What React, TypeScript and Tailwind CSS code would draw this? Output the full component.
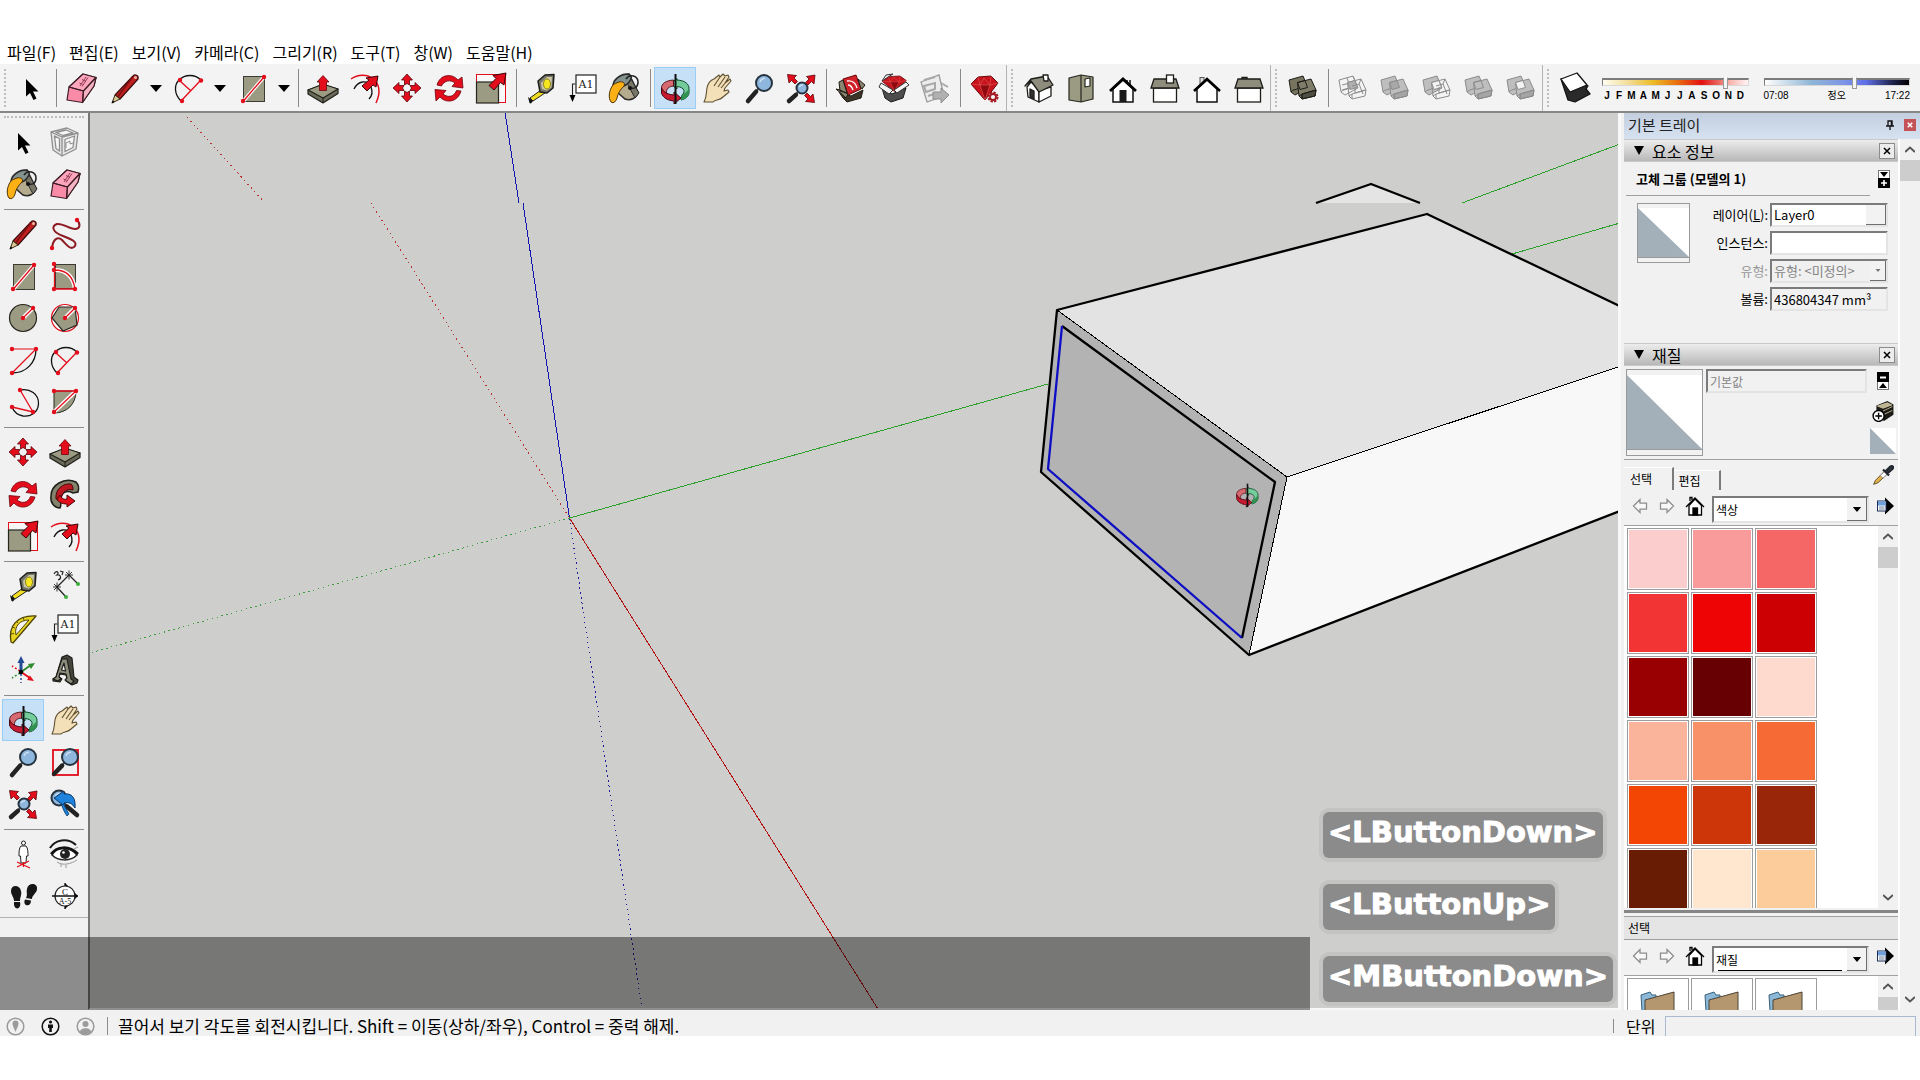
import React, { ReactNode } from "react";

const RED = "#e30d1b";
const STONE = "#9b9a82";

function Svg({ children, className = "size-10" }: { children: ReactNode; className?: string }) {
  return (
    <svg viewBox="0 0 40 40" className={className + " shrink-0"} fill="none" aria-hidden="true">
      {children}
    </svg>
  );
}

/* ---------- shared drawing pieces ---------- */

function Dots({ pts }: { pts: [number, number][] }) {
  return (
    <>
      {pts.map(([x, y]) => (
        <circle key={x + "-" + y} cx={x} cy={y} r="2.2" fill={RED} />
      ))}
    </>
  );
}

function BigArrow() {
  return <path d="M35 5 L33 17 L29.500 14.500 L23 22 L18 17.500 L25 10.500 L22 7.500 Z" fill={RED} stroke="#3a0509" strokeWidth="1" />;
}

function Lens({ x, y, r, hx, hy }: { x: number; y: number; r: number; hx: number; hy: number }) {
  const k = 0.72;
  const sx = hx < x ? -1 : 1;
  return (
    <>
      <path d={`M${x + sx * r * k} ${y + r * k} L${hx} ${hy}`} stroke="#555" strokeWidth="2" />
      <path d={`M${x + sx * (r + 3) * k} ${y + (r + 4) * k} L${hx} ${hy}`} stroke="#222" strokeWidth="4.500" strokeLinecap="round" />
      <circle cx={x} cy={y} r={r} fill="#8fb6dc" stroke="#26333f" strokeWidth="2" />
      <path d={`M${x - r / 2} ${y - 1} Q${x - r / 3} ${y - r / 1.7} ${x + 1} ${y - r / 1.7}`} stroke="#c9dff2" strokeWidth="1.500" />
    </>
  );
}

function Ruby({ x, y, s, squash = 1 }: { x: number; y: number; s: number; squash?: number }) {
  return (
    <g transform={`translate(${x} ${y}) scale(${s} ${s * squash})`}>
      <path d="M0 8 L7 1 L20 0 L27 7 L14 24 Z" fill="#c8131c" stroke="#6b060b" strokeWidth="1" />
      <path d="M9 9 L14 24 L19 9 Z" fill="#90090f" />
      <path d="M0 8 L9 9 L14 24 L19 9 L27 7 M9 9 L13 2 L19 9 Z M7 1 L9 9 M20 0 L19 9" stroke="#e05c5c" strokeWidth=".6" />
    </g>
  );
}

function OrbitArt() {
  return (
    <>
      <path d="M22 12 C30 12.500 34 16 34 20.500 L34 25 C33.500 28.500 30.500 31 26 32 L27 27 C28.500 26 29 24.500 29 22.500 C28 20 26 19 22 18.500 L22 21 L15.500 16 L22 10.500 Z" fill="#74cb9b" stroke="#0d4a27" strokeWidth="1" />
      <path d="M34 20.500 L34 25 C33.500 28.500 30.500 31 26 32 L27 27 C29.500 25.500 32 24 34 20.500 Z" fill="#319150" />
      <path d="M18.500 12 C11 12.500 6.500 15.500 6.500 20 C8 23.500 10 25 11.500 25.500 C11 20.500 14 18.500 18.500 18 Z" fill="#d76a70" stroke="#4a0710" strokeWidth=".9" />
      <path d="M6.500 20 L6.500 25 C8 30 13 32.500 19 33 V36 L26 30 L19 24 V27 C13 26.500 8.500 24.500 6.500 20 Z" fill="#c51a32" stroke="#4a0710" strokeWidth="1" />
      <path d="M20.500 6 V36" stroke="#111" strokeWidth="2" />
    </>
  );
}

function SolidPair({ a, b, mid, line, wireA, wireB }: { a: string; b: string; mid?: string; line: string; wireA?: boolean; wireB?: boolean }) {
  return (
    <g stroke={line} strokeWidth="1" strokeLinejoin="round">
      <path d="M6 12 L20 8 L25 20 L12 27 L8 24 Z" fill={wireA ? "none" : a} />
      <path d="M8 24 L9.500 22.500 L17 20" />
      {wireA && <path d="M9 17 L17 15 M14 10 L17 19 M20 8 L22 13 M9 22 L23 18" />}
      <path d="M14.500 14.500 L28 11 L33 22 L32 28 L19 31 L16 28 Z" fill={wireB ? "none" : b} />
      <path d="M16 28 L19 26 L33 22 M19 26 L19 31" />
      {!wireB && <path d="M19 26 L33 22 L32 28 L19 31 Z" fill={line} fillOpacity=".5" />}
      <path d="M14.500 14.500 L22 12.500 L24.500 19.500 L17 21.500 Z" fill={mid ?? "none"} />
      {wireB && <path d="M28 11 L26 16 L19 18 M26 16 L30 26 M22 19 V25 L32 22" />}
    </g>
  );
}

const AxisArrow = ({ r }: { r: number }) => (
  <path transform={`rotate(${r} 20 20)`} d="M20 6 L25.500 12 H22.500 V17 L20 15.500 L17.500 17 V12 H14.500 Z" fill={RED} stroke="#5b060c" strokeWidth=".8" />
);

const CornerArrow = ({ r }: { r: number }) => (
  <path transform={`rotate(${r} 20 20.500)`} d="M34 7 L33 16 L30.500 13.500 L27 17 L24.500 14.500 L28 11 L25.500 8.500 Z" fill={RED} stroke="#5b060c" strokeWidth=".8" />
);

/* ---------- icon set ---------- */

const icons: Record<string, ReactNode> = {
  select: <path d="M15 11 V28.500 L19 25 L22.500 32 L25.500 30.500 L22 23.500 H27.500 Z" fill="#000" />,
  component: (
    <g stroke="#8f8f8f" strokeWidth="1.300" strokeLinejoin="round">
      <path d="M6 10 L22 6 L33 11 L31 27 L17 34 L8 28 Z" fill="#e6e6e6" />
      <path d="M6 10 L17 15 L33 11 M17 15 V34" />
      <path d="M9.500 14 L14.500 16.500 V29 L11 26.500 Z M20 17.500 L29.500 14 L28 25.500 L20 29.500 Z M11 10.500 L21 8 L28 11 L18 13.500 Z" fill="#f6f6f6" />
      <path d="M21 26 V21 L25 19 V22 L28 21" strokeWidth="1" />
    </g>
  ),
  bucket: (
    <>
      <path d="M15 9 L24 6 L33 24 C32 30 26 33 20 31 L12 24 Z" fill="#b5ab8e" stroke="#2b2b2b" strokeWidth="1.500" />
      <path d="M26 11 L34 25 L30 30 L22 15 Z" fill="#777568" stroke="#2b2b2b" />
      <path d="M8 17 C9 10 19 4 25 7 C28 9 25 14 21 17 C17 19 13 21 8 17 Z" fill="#84928f" stroke="#2b2b2b" strokeWidth="1.500" />
      <path d="M8 17 C4 22 3 30 6 34 C9 36 11 33 12 30 C13 25 15 22 19 18 C21 15 17 13 14 14 C11 15 9 16 8 17 Z" fill="#fbb016" stroke="#4a3206" strokeWidth="1" />
      <path d="M21 11 C25 5 33 8 33 14 C33 20 29 21 25 20" stroke="#222" strokeWidth="1.500" />
      <circle cx="25" cy="20" r="2" fill="#111" />
    </>
  ),
  eraser: (
    <g strokeLinejoin="round" stroke="#3d1c24" strokeWidth="1.200">
      <path d="M8 19 L22 6 L35 9.500 L33 18 L21.500 34.500 L6 32 Z" fill="#f98ba9" />
      <path d="M8 19 L22 6 L35 9.500 L22.500 23 Z" fill="#fba6bd" />
      <path d="M22.500 23 L35 9.500 L33 18 L21.500 34.500 Z" fill="#f7b3c4" />
      <path d="M8 19 L22.500 23 L21.500 34.500" />
      <path d="M19 18 L25 9 M21 18.500 L27 9.500 M18.500 15 l3 1.500 M21 11.500 l4 2" stroke="#8c3048" strokeWidth=".9" />
    </g>
  ),
  pencil: (
    <g strokeLinejoin="round">
      <path d="M28 8 C30 5.500 34 7.500 33 11 L15 31 L10 27 Z" fill="#c02020" stroke="#3c0c0c" strokeWidth="1.200" />
      <path d="M27.500 9 L13 28.500" stroke="#7c1010" strokeWidth="1.500" />
      <path d="M10 27 L15 31 L7 35 Z" fill="#dcc99a" stroke="#33290f" strokeWidth="1" />
      <path d="M8 32.500 L9.500 34 L6.500 35.500 Z" fill="#000" />
      <circle cx="30.500" cy="9.500" r="1.500" fill="#e9b7a0" />
    </g>
  ),
  freehand: (
    <>
      <path d="M7 34 C8 25 13 22 17 26 C22 31 25 36 29 33 C34 28 26 25 18 22 C7 18 6 12 12 10 C18 9 24 15 30 15 C35 15 36 10 32 6" stroke="#8d1a22" strokeWidth="2" />
      <Dots pts={[[7, 34], [32, 6]]} />
    </>
  ),
  rect: (
    <>
      <rect x="10.500" y="8.500" width="21" height="25" fill={STONE} stroke="#3b3b33" />
      <path d="M10.500 33 L31 9" stroke="#fff" strokeWidth="3.500" />
      <path d="M10.500 33 L31 9" stroke={RED} strokeWidth="1.300" />
      <Dots pts={[[10, 33], [31, 9]]} />
    </>
  ),
  rotrect: (
    <>
      <rect x="10.500" y="8.500" width="20" height="24" fill={STONE} stroke="#3b3b33" />
      <path d="M10 14 C21 14 28 20 30 33" stroke="#fff" strokeWidth="4" />
      <path d="M9.500 8 V33 H30 C28 20 21 14 10 14" stroke={RED} strokeWidth="1.300" />
      <Dots pts={[[9, 8], [9, 14], [9, 33], [30, 33]]} />
    </>
  ),
  circle: (
    <>
      <circle cx="20" cy="20" r="13.500" fill={STONE} stroke="#26261f" strokeWidth="1.200" />
      <path d="M20 20 L30 10" stroke="#fff" strokeWidth="4" />
      <path d="M20 20 L30 10" stroke={RED} strokeWidth="1.300" />
      <Dots pts={[[20, 20], [30, 10]]} />
    </>
  ),
  polygon: (
    <>
      <circle cx="20" cy="20" r="13.500" stroke={RED} fill="#fff" strokeWidth="1.200" />
      <path d="M7 20 L14 9 L30 9 L32 27 L18 33 Z" fill={STONE} stroke="#26261f" strokeWidth="1.200" />
      <path d="M20 20 L30 10" stroke="#fff" strokeWidth="4" />
      <path d="M20 20 L30 10" stroke={RED} strokeWidth="1.300" />
      <Dots pts={[[20, 20], [30, 10]]} />
    </>
  ),
  arcA: (
    <>
      <path d="M33 9 C33 22 24 33 9 33" stroke="#111" strokeWidth="1.300" />
      <path d="M33 9 H9 M9 33 L33 9" stroke={RED} strokeWidth="1.200" />
      <Dots pts={[[9, 9], [33, 9], [9, 33]]} />
    </>
  ),
  arcB: (
    <>
      <path d="M12 33 C5 26 5 17 10 12 C16 6 26 6 32 12" stroke="#111" strokeWidth="1.300" />
      <path d="M12 33 L31 13 M11 13 L22 23" stroke={RED} strokeWidth="1.300" />
      <Dots pts={[[11, 12], [32, 12.500], [13, 33]]} />
    </>
  ),
  arcC: (
    <>
      <path d="M17 8 C27 6 36 12 35.500 22 C35 31 27 35 20 34 C14 33 11 30 9 25" stroke="#111" strokeWidth="1.300" />
      <path d="M17 8 L30 30 L9 25" stroke={RED} strokeWidth="1.300" />
      <Dots pts={[[17, 8], [30, 30], [9, 25]]} />
    </>
  ),
  pie: (
    <>
      <path d="M9 9 H31 C31 22 22 31 9 31 Z" fill={STONE} stroke="#26261f" />
      <path d="M9 30 L31 9" stroke="#fff" strokeWidth="4" />
      <path d="M9 9 H31 L9 30" stroke={RED} strokeWidth="1.300" />
      <Dots pts={[[9, 9], [31, 9], [9, 30]]} />
    </>
  ),
  push: (
    <>
      <path d="M5 22 L20 17 L35 21 V25.500 L20 35 L5 26 Z" fill="#6a6a58" stroke="#1f1f1a" strokeWidth="1.200" strokeLinejoin="round" />
      <path d="M5 22 L20 16 L35 21 L20 30 Z" fill={STONE} stroke="#1f1f1a" strokeWidth="1.200" strokeLinejoin="round" />
      <path d="M20 30 V35" stroke="#1f1f1a" />
      <path d="M20 7.500 L26 14 H23.500 V22.500 H16.500 V14 H14 Z" fill={RED} stroke="#6b060c" strokeWidth=".8" />
    </>
  ),
  offset: (
    <>
      <path d="M6 11 C20 1 42 12 31 35" stroke={RED} strokeWidth="1.500" />
      <path d="M9 21 C13 13 22 11 26 19 C28 24 27 28 24 31" stroke="#111" strokeWidth="1.300" />
      <path d="M33 8 L31 19 L28 17 L22 23 L17 18 L24 12 L21 10 Z" fill={RED} stroke="#3a0509" strokeWidth="1" />
    </>
  ),
  move: (
    <>
      <AxisArrow r={0} />
      <AxisArrow r={90} />
      <AxisArrow r={180} />
      <AxisArrow r={270} />
    </>
  ),
  rotate: (
    <g fill={RED} stroke="#6b060c" strokeWidth=".8">
      <path d="M8 17 C11 6 23 5 29 12 L33 9 L34 20 L23 18.500 L26 15 C21 11 15 13 12.500 18 Z" />
      <path d="M32 23 C29 34 17 36 11 29 L7 33 L6 21.500 L17 22.500 L14 26 C19 30 25 29 27.500 22.500 Z" />
    </g>
  ),
  follow: (
    <>
      <path d="M6 22 C6 11 19 3 31 8 C34 11 34 15 33 18 L28 19 C22 16 17 18 16 24 C15 28 17 30 15 34 C9 34 5 28 6 22 Z" fill="#83826d" stroke="#1f1f1a" strokeWidth="1.500" />
      <path d="M11 25 C10 15 18 9 26 10 C28 12 28 14 28 16 C22 14 17 18 16 25 Z" fill="#bd1820" stroke="#4c060a" />
      <path d="M15 21 C16 24 19 26 22 25 L22 21 L30 27 L22 33 L22 30 C17 30 13 28 12 25 Z" fill={RED} stroke="#4c060a" />
    </>
  ),
  scale: (
    <>
      <rect x="5.500" y="6.500" width="29" height="28" stroke={RED} fill="#fff" fillOpacity=".4" />
      <rect x="5.500" y="14" width="22" height="21" fill={STONE} stroke="#26261f" strokeWidth="1.200" />
      <BigArrow />
    </>
  ),
  tape: (
    <g strokeLinejoin="round">
      <path d="M20 22 L9 30 L12 33 L24 25 Z" fill="#f2dc22" stroke="#222" strokeWidth="1" />
      <path d="M7 29 L12 33 L10 35.500 L8.500 35 Z" fill="#111" />
      <path d="M17 13 L24 7 L33 6.500 L32 20 L26 25 L19 24 Z" fill="#77776c" stroke="#1d1d1a" strokeWidth="1.500" />
      <path d="M20 15 L26 9 L31 9 L30.500 19 L26 22.500 L21 21 Z" fill="#c9c6a6" />
      <ellipse cx="26" cy="16" rx="3.500" ry="5" fill="#f7e720" stroke="#8f8414" />
    </g>
  ),
  dims: (
    <>
      <path d="M12 21 L24 9 M11 20 L21 31 M24 9 L33 18" stroke="#222" strokeWidth="1.200" />
      <path d="M12 16.500 V25.500 M8 21 H16 M9 18 L15 24 M9 24 L15 18 M24 4.500 V13.500 M20 9 H28 M21 6 L27 12 M21 12 L27 6" stroke="#222" strokeWidth=".9" />
      <path d="M9 8 C11 4 15 6 12 9 C16 8 17 13 13 14 M15 5 L18 6 L17 9" stroke="#222" strokeWidth="1.200" />
      <circle cx="21" cy="31" r="2" fill="#3fae3f" />
      <circle cx="33" cy="18" r="2" fill="#3fae3f" />
    </>
  ),
  protractor: (
    <g stroke="#4d4303" strokeLinejoin="round">
      <path d="M8 34 C5 18 14 7 33 8 L10 35 Z" fill="#e9d51f" strokeWidth="1.300" />
      <path d="M13 27 C11 18 17 12 26 12 Z" fill="#f3f3f3" />
      <path d="M8 26 l3 -.5 M9 19 l3 1 M13 13 l2 2 M20 9 l1 3" strokeWidth=".9" />
    </g>
  ),
  text: (
    <>
      <rect x="13" y="7" width="20" height="18" fill="#fff" stroke="#222" strokeWidth="1.200" />
      <text x="23" y="20" textAnchor="middle" fontFamily="DejaVu Serif, serif" fontSize="11" fill="#222">A1</text>
      <path d="M12.500 16 H9.500 V28" stroke="#222" strokeWidth="1.100" />
      <path d="M6.500 27 H12.500 L9.500 34 Z" fill="#000" />
    </>
  ),
  axes: (
    <>
      <path d="M18 22 V11" stroke="#224a96" strokeWidth="3" />
      <path d="M18 6 L21.500 13 H14.500 Z" fill="#224a96" />
      <path d="M18 22 L28 15" stroke="#2e8b2e" strokeWidth="2" />
      <path d="M32 13 L28 19 L25 14 Z" fill="#2e8b2e" />
      <path d="M18 22 L27 28" stroke={RED} strokeWidth="2" />
      <path d="M31 31 L24 30 L27 25.500 Z" fill={RED} />
      <path d="M18 24 V33" stroke="#224a96" strokeWidth="1.500" strokeDasharray="2 2" />
      <path d="M17 23 L9 28" stroke="#2e8b2e" strokeWidth="1.500" strokeDasharray="2 2" />
      <path d="M17 21 L9 16" stroke={RED} strokeWidth="1.500" strokeDasharray="2 2" />
      <circle cx="18" cy="22" r="2.300" fill="#000" />
    </>
  ),
  text3d: (
    <g strokeLinejoin="round" stroke="#1c1c18" strokeWidth="1.100">
      <path d="M8 29 L11 27 L17 7 L22 5 L27 8 L29 27 L33 30 L32 33 L27 35 L21 31 L22 28 L21 25 L15 24 L14 27 L17 29 L15 32 L8 31 Z" fill="#45453c" />
      <path d="M8 29 L11 27 L17 9 L22 9 L26 29 L29 31 L26 34 L20 30 L22 28 L21 24 L15 23 L14 27 L16 28.500 L13 31 Z" fill="#8e8d7d" />
      <path d="M16.500 20 L19 13 L20.500 21 Z" fill="#f3f3f3" />
    </g>
  ),
  orbit: <OrbitArt />,
  hand: (
    <path d="M7 34 C10 28 9 25 10 20 C11 15 14 12 17 11 L22 7 L23 9 L26 6 L28 8 L31 7 L32 9 L28 15 L33 11 L34 13 L28 20 L27 23 L31 22 L32 24 L26 29 C22 33 18 31 16 34 Z M17 18 L23 9 M21 19 L28 9 M24 20 L29 14" fill="#f3e0b8" stroke="#5e4f31" strokeWidth="1.100" strokeLinejoin="round" />
  ),
  zoom: <Lens x={25} y={15} r={8} hx={9} hy={33} />,
  zoomwin: (
    <>
      <rect x="8" y="8" width="25" height="25" stroke={RED} strokeWidth="1.800" />
      <Lens x={25} y={15} r={8} hx={9} hy={32} />
    </>
  ),
  zoomext: (
    <>
      <Lens x={21} y={20} r={5.5} hx={8} hy={33} />
      <CornerArrow r={0} />
      <CornerArrow r={90} />
      <CornerArrow r={270} />
    </>
  ),
  previous: (
    <>
      <Lens x={14} y={14} r={7.5} hx={32} hy={31} />
      <path d="M9 14 L19 7 V10 C26 9 31 13 30 24 C27 19 24 18 19 19 V22 Z" fill="#1f83dc" stroke="#0b3866" strokeWidth="1" />
      <path d="M16 20 C18 24 19 28 22 32 L24 30 L19 21 Z" fill="#1f83dc" stroke="#0b3866" strokeWidth=".8" />
    </>
  ),
  camera: (
    <>
      <circle cx="20.500" cy="9" r="2" fill="#fff" stroke="#222" />
      <path d="M18 12 H23 C25 14 25 19 25 22 H23.500 L23 29 H18 L17.500 22 H16 C16 18 16 14 18 12 Z" fill="#fff" stroke="#222" />
      <path d="M14 33 L26 27 M14 28 L27 34 M20.500 28 V33" stroke={RED} strokeWidth="1.200" />
    </>
  ),
  eye: (
    <>
      <path d="M5 14 C10 6 22 3 31 11" stroke="#1a1a1a" strokeWidth="2.200" />
      <path d="M7 21 C12 13 24 12 32 21 C25 28 13 27 7 21 Z" fill="#fff" stroke="#222" strokeWidth="1.500" />
      <path d="M6 20 C12 12 24 11 33 20" stroke="#111" strokeWidth="2.500" />
      <circle cx="20" cy="20" r="5" fill="#222" />
      <circle cx="18.500" cy="18.500" r="1.300" fill="#fff" />
      <path d="M12 28 C18 32 26 30 32 26 M16 30 V33 M21 31 V34 M29 15 l4 -2" stroke="#999" strokeWidth="1" />
    </>
  ),
  feet: (
    <g fill="#161616">
      <path d="M8 15 C8 8 17 9 18 15 C19 19 17 21 17 25 L11 25 C11 21 8 19 8 15 Z" />
      <path d="M24 13 C25 6 35 7 34 13 C34 17 29 19 29 23 L23 22 C25 18 23 17 24 13 Z" />
      <path d="M11 26 L17 26 C19 34 10 35 11 26 Z M22 23.500 L28 24.500 C28 32 19 30 22 23.500 Z" />
    </g>
  ),
  section: (
    <>
      <path d="M20 7 L33 20 L20 33 Z" fill="#000" />
      <circle cx="20" cy="20" r="10" fill="#fff" stroke="#222" strokeWidth="1.200" />
      <path d="M7 20 H33 M20 7 V10 M20 30 V33" stroke="#111" strokeWidth="1.300" />
      <text x="20" y="18.500" textAnchor="middle" fontFamily="Liberation Serif, serif" fontSize="9" fill="#111">C</text>
      <text x="20" y="28" textAnchor="middle" fontFamily="Liberation Serif, serif" fontSize="8" fill="#111">A-5</text>
    </>
  ),
  warehouse: (
    <>
      <path d="M8 24 L20 28 L32 22 L30 30 L16 34 L12 30 Z" fill="#3b3629" stroke="#1d1a12" />
      <path d="M12 11 L25 7 L30 21 L17 27 Z" fill="#d0202a" stroke="#6b060b" />
      <path d="M16 13 C21 12 25 15 26 20 M17 17 C20 17 21 19 22 22" stroke="#fff" strokeWidth="1.300" />
      <path d="M8 14 L12 12 L16 25 L9 23 Z M5 21 L9 22 L17 26 L15 30 Z M27 11 L34 17 L31 21 L29 18 Z" fill="#8a8471" stroke="#1d1a12" />
    </>
  ),
  extwarehouse: (
    <>
      <path d="M9 20 L19 26 L33 20 L30 30 L18 34 L12 30 Z" fill="#4d4d4d" stroke="#1a1a1a" />
      <Ruby x={9} y={8} s={0.9} squash={0.72} />
      <path d="M8 15 L6 19 L16 26 L20 22 Z M33 14 L36 17 L24 25 L21 22 Z M9 13 L13 7 L20 6 L15 9 Z" fill="#f4f4f4" stroke="#333" />
    </>
  ),
  send: (
    <>
      <path d="M6 14 L24 7 L29 28 L12 34 Z" fill="#ececec" stroke="#9b9b9b" strokeWidth="1.300" />
      <path d="M9 12 L20 9 M9 18 L20 15 V21 L11 24 Z M13 28 L19 26 M26 15 L33 19" stroke="#a8a8a8" strokeWidth="2" />
      <path d="M18 24 H26 V20 L34 27 L26 35 V31 H18 Z" fill="#b0b0b0" stroke="#8e8e8e" />
    </>
  ),
  extension: (
    <>
      <Ruby x={6} y={8} s={1} />
      <circle cx="28" cy="29" r="4.500" fill="#f3f3f3" stroke="#a31820" strokeWidth="2" strokeDasharray="2.400 1.100" />
      <circle cx="28" cy="29" r="3" stroke="#a31820" strokeWidth="1.800" />
    </>
  ),
  viewIso: (
    <g stroke="#1c1c18" strokeWidth="1.300" strokeLinejoin="round">
      <path d="M8 19 L12 14 L20 21 V34 L9 29 Z" fill="#fff" />
      <path d="M20 23 L32 19 V28 L20 34 Z" fill="#fff" />
      <path d="M6 18 L12 11 L28 8 L34 17 L20 24 L12 13 Z" fill="#8e8d7d" />
      <path d="M24 7 H29 V13 H25 Z" fill="#fff" />
      <path d="M11 21 L15 23 V31 L11 29 Z" fill="#333" />
    </g>
  ),
  viewTop: (
    <g stroke="#26261f" strokeWidth="1.200" strokeLinejoin="round">
      <path d="M8 10 L20 7 L32 9 V31 L20 34 L8 32 Z" fill={STONE} />
      <path d="M20 7 V34" />
      <path d="M24 11 L29 10 V18 L24 19 Z" fill="#fff" />
    </g>
  ),
  viewFront: (
    <>
      <path d="M24 12 V15 M27 12 V17" stroke="#111" strokeWidth="1.500" />
      <path d="M10 21 L20 12 L30 21 V34 H10 Z" fill="#fff" stroke="#111" strokeWidth="1.500" />
      <path d="M7 23 L20 11 L33 23" stroke="#000" strokeWidth="2.800" />
      <rect x="16.500" y="22" width="7" height="12" fill="#1b1b1b" />
    </>
  ),
  viewRight: (
    <g stroke="#1c1c18" strokeWidth="1.300">
      <rect x="8.500" y="20" width="23" height="14" fill="#fff" />
      <path d="M9 11 H31 L34 20 H6 Z" fill="#8e8d7d" />
      <rect x="21.500" y="7" width="7" height="8" fill="#fff" />
    </g>
  ),
  viewBack: (
    <>
      <rect x="13" y="9.500" width="4" height="7" fill="#ddd" stroke="#555" />
      <path d="M10 21 L20 12 L30 21 V34 H10 Z" fill="#fff" stroke="#111" strokeWidth="1.500" />
      <path d="M7 23 L20 11 L33 23" stroke="#000" strokeWidth="2.500" />
    </>
  ),
  viewLeft: (
    <g stroke="#1c1c18" strokeWidth="1.300">
      <rect x="8.500" y="20" width="23" height="14" fill="#fff" />
      <path d="M13 11 V9.500 H18 V11" fill="#777" />
      <path d="M9 11 H31 L34 20 H6 Z" fill="#8e8d7d" />
    </g>
  ),
  outerShell: <SolidPair a="#76745f" b="#7f7d6a" line="#1d1d18" />,
  intersect: <SolidPair a="none" b="none" mid="#b0b0b0" line="#8c8c8c" wireA wireB />,
  union: <SolidPair a="#bebebe" b="#bebebe" mid="#a8a8a8" line="#8c8c8c" />,
  subtract: <SolidPair a="#bebebe" b="none" mid="#f3f3f3" line="#8c8c8c" wireB />,
  trim: <SolidPair a="#bebebe" b="#bebebe" line="#8c8c8c" />,
  split: <SolidPair a="#bebebe" b="#bebebe" mid="#f3f3f3" line="#8c8c8c" />,
  shadow: (
    <g strokeLinejoin="round" stroke="#111" strokeWidth="1.300">
      <path d="M6 11 L13 32 L20 34 L35 26 L31 21 L33 18 Z" fill="#2a2a2a" />
      <path d="M6 11 L22 5 L32 17 L15 24 Z" fill="#fff" />
    </g>
  ),
  prev: <path d="M7 20 L20 7 V14 H33 V26 H20 V33 Z" stroke="#8c8c8c" strokeWidth="2.500" fill="#f8f8f8" />,
  next: <path d="M33 20 L20 7 V14 H7 V26 H20 V33 Z" stroke="#8c8c8c" strokeWidth="2.500" fill="#f8f8f8" />,
  home: (
    <g stroke="#000" strokeWidth="2.600">
      <path d="M10 10 V3 H14 V8" />
      <path d="M8 19 V38 H33 V19 L20 6 Z" fill="#fff" />
      <path d="M2 22 L20 4 L38 22" />
      <rect x="16" y="24" width="9" height="14" fill="#000" />
    </g>
  ),
  details: (
    <>
      <path d="M20 3 L38 20 L20 37 V28 H12 V12 H20 Z" fill="#000" />
      <rect x="5" y="10" width="17" height="20" fill="#fff" stroke="#1c2d55" strokeWidth="2" />
      <rect x="6" y="11" width="15" height="8" fill="#6e9edb" />
      <path d="M8 22 H19 M8 26 H19" stroke="#6b7c9b" strokeWidth="2" />
    </>
  ),
  addBox: (
    <>
      <path d="M8 10 L28 2 L39 8 V27 L22 38 L8 28 Z" fill="#1b1a15" />
      <path d="M10 11 L28 5 L36 9 L20 15 Z M20 20 L37 12 M20 27 L37 19" fill="#bdb591" stroke="#d3cba8" strokeWidth="1.500" />
      <circle cx="12" cy="29" r="10" fill="#fff" stroke="#000" strokeWidth="2.500" />
      <path d="M12 23 V35 M6 29 H18" stroke="#000" strokeWidth="2.500" />
    </>
  ),
  dropper: (
    <>
      <path d="M3 37 L6 30 L23 13 L28 18 L11 34 Z" fill="#e2b14b" stroke="#4a3a16" strokeWidth="1.500" />
      <path d="M15 21 L23 13 L28 18 L20 26 Z" fill="#fff" stroke="#555" />
      <path d="M20 10 L31 21 M25 13 L33 5 C37 1 41 7 36 10 L28 17 Z" fill="#3d4247" stroke="#222730" strokeWidth="4" />
    </>
  ),
};

/* ---------- toolbar parts ---------- */

function Tool({ icon, label, active }: { icon: string; label: string; active?: boolean }) {
  return (
    <button
      type="button"
      aria-label={label}
      className={
        active
          ? "flex h-[42px] w-[42px] shrink-0 items-center justify-center border border-[#99cdf5] bg-[#c5e0f7]"
          : "flex h-[42px] w-[42px] shrink-0 items-center justify-center"
      }
    >
      <Svg>{icons[icon]}</Svg>
    </button>
  );
}

function SplitTool({ icon, label }: { icon: string; label: string }) {
  return (
    <div className="ml-0.5 flex shrink-0 items-center">
      <Tool icon={icon} label={label} />
      <button type="button" aria-label={label + " 옵션"} className="flex h-10 w-5 items-center justify-center">
        <svg viewBox="0 0 12 7" className="h-[7px] w-3" aria-hidden="true">
          <path d="M0 0 H12 L6 7 Z" fill="#000" />
        </svg>
      </button>
    </div>
  );
}

const Sep = () => (
  <div className="flex w-2 shrink-0 justify-center">
    <div className="h-[38px] w-px bg-[#8a8a8a]" />
  </div>
);

const GroupEnd = () => (
  <div className="flex h-[46px] w-3 shrink-0 gap-1 border-l border-[#b4b4b4] py-1 pl-1">
    <div className="h-full border-l-2 border-dotted border-[#bdbdbd]" />
  </div>
);

function TopToolbar() {
  return (
    <div className="flex h-[49px] shrink-0 items-center overflow-hidden border-b-2 border-[#868885] bg-[#f3f3f3] pt-px">
      <div className="flex w-2.5 shrink-0 justify-center">
        <div className="h-[38px] border-l-2 border-dotted border-[#bdbdbd]" />
      </div>
      <Tool icon="select" label="선택" />
      <Sep />
      <Tool icon="eraser" label="지우기" />
      <SplitTool icon="pencil" label="선" />
      <SplitTool icon="arcB" label="호" />
      <SplitTool icon="rect" label="직사각형" />
      <Sep />
      <Tool icon="push" label="밀기/끌기" />
      <Tool icon="offset" label="오프셋" />
      <Tool icon="move" label="이동" />
      <Tool icon="rotate" label="회전" />
      <Tool icon="scale" label="배율" />
      <Sep />
      <Tool icon="tape" label="줄자" />
      <Tool icon="text" label="텍스트" />
      <Tool icon="bucket" label="페인트 통" />
      <Sep />
      <Tool icon="orbit" label="궤도" active />
      <Tool icon="hand" label="이동 보기" />
      <Tool icon="zoom" label="확대/축소" />
      <Tool icon="zoomext" label="범위 확대/축소" />
      <Sep />
      <Tool icon="warehouse" label="3D Warehouse" />
      <Tool icon="extwarehouse" label="Extension Warehouse" />
      <Tool icon="send" label="LayOut으로 보내기" />
      <Sep />
      <Tool icon="extension" label="확장 프로그램 관리자" />
      <GroupEnd />
      <Tool icon="viewIso" label="등각" />
      <Tool icon="viewTop" label="맨 위" />
      <Tool icon="viewFront" label="앞" />
      <Tool icon="viewRight" label="오른쪽" />
      <Tool icon="viewBack" label="뒤" />
      <Tool icon="viewLeft" label="왼쪽" />
      <GroupEnd />
      <Tool icon="outerShell" label="외부 셸" />
      <Sep />
      <Tool icon="intersect" label="교차" />
      <Tool icon="union" label="합집합" />
      <Tool icon="subtract" label="빼기" />
      <Tool icon="trim" label="자르기" />
      <Tool icon="split" label="분할" />
      <GroupEnd />
      <Tool icon="shadow" label="그림자" />
      <ShadowSliders />
    </div>
  );
}

const rangeClass =
  "block h-2 w-full appearance-none border border-t-2 border-[#d8d8d8] border-t-[#7c7c7c] border-l-[#7c7c7c] [&::-webkit-slider-thumb]:h-3 [&::-webkit-slider-thumb]:w-[5px] [&::-webkit-slider-thumb]:appearance-none [&::-webkit-slider-thumb]:border [&::-webkit-slider-thumb]:border-[#9a9a9a] [&::-webkit-slider-thumb]:border-t-white [&::-webkit-slider-thumb]:bg-[#f5f5f5]";

function ShadowSliders() {
  return (
    <div className="mt-1 ml-1.5 flex min-w-0 flex-1 gap-[15px] pr-2.5 font-['Liberation_Sans','Noto_Sans_CJK_KR',sans-serif] text-[10px] leading-3 text-black">
      <div className="flex-1">
        <input type="range" aria-label="날짜" defaultValue={86} className={rangeClass + " bg-[linear-gradient(90deg,#fffdf0,#f2dc96_18%,#edbd28_34%,#e87511_50%,#e31010_68%,#e86a62_80%,#f9b6b0_88%,#fff4f4)]"} />
        <div className="mt-1 flex justify-between pr-1 pl-px font-bold">
          {"JFMAMJJASOND".split("").map((m, i) => (
            <span key={i} className="w-2 text-center">{m}</span>
          ))}
        </div>
      </div>
      <div className="flex-1">
        <input type="range" aria-label="시간" defaultValue={63} className={rangeClass + " bg-[linear-gradient(90deg,#ffffff,#8fb6d6_32%,#7d95e6_55%,#5f6fe8_70%,#20264d_88%,#000)]"} />
        <div className="mt-1 flex justify-between">
          <span>07:08</span>
          <span>정오</span>
          <span>17:22</span>
        </div>
      </div>
    </div>
  );
}

const leftGroups: [string, string][][] = [
  [["select", "선택"], ["component", "구성요소"], ["bucket", "페인트 통"], ["eraser", "지우기"]],
  [["pencil", "선"], ["freehand", "자유형"], ["rect", "직사각형"], ["rotrect", "회전된 직사각형"], ["circle", "원"], ["polygon", "다각형"], ["arcA", "호"], ["arcB", "2점 호"], ["arcC", "3점 호"], ["pie", "파이"]],
  [["move", "이동"], ["push", "밀기/끌기"], ["rotate", "회전"], ["follow", "따라가기"], ["scale", "배율"], ["offset", "오프셋"]],
  [["tape", "줄자"], ["dims", "치수"], ["protractor", "각도기"], ["text", "텍스트"], ["axes", "축"], ["text3d", "3D 텍스트"]],
  [["orbit", "궤도"], ["hand", "이동 보기"], ["zoom", "확대/축소"], ["zoomwin", "창 확대/축소"], ["zoomext", "범위"], ["previous", "이전"]],
  [["camera", "카메라 배치"], ["eye", "둘러보기"], ["feet", "걷기"], ["section", "단면"]],
];

function LeftToolbar() {
  return (
    <div className="w-[88px] shrink-0 bg-[#f1f1f1]">
      <div className="border-b border-[#b4b4b4] px-0.5">
        <div className="flex h-2 items-center px-0.5">
          <div className="w-full border-t-2 border-dotted border-[#bdbdbd]" />
        </div>
        {leftGroups.map((group, i) => (
          <div key={i}>
            {i > 0 && (
              <div className="flex h-2 items-center px-0.5">
                <div className="h-px w-20 bg-[#8a8a8a]" />
              </div>
            )}
            <div className="grid grid-cols-[42px_42px]">
              {group.map(([icon, label]) => (
                <Tool key={icon} icon={icon} label={label} active={icon === "orbit"} />
              ))}
            </div>
          </div>
        ))}
      </div>
    </div>
  );
}

/* ---------- model view ---------- */

function Viewport() {
  return (
    <div className="relative min-w-0 flex-1 overflow-hidden border-r-[3px] border-b-2 border-l-2 border-r-[#f8f8f8] border-b-[#f8f8f8] border-l-[#767676] bg-[#cececc]">
      <svg viewBox="90 113 1528 895" preserveAspectRatio="xMinYMin slice" className="block h-full w-full" aria-label="모델">
        <g fill="none" strokeWidth="1" shapeRendering="crispEdges">
          <path d="M505 112 L519 203 M523 203 L569.500 518" stroke="#1414b0" />
          <path d="M569.500 518 L642 1009" stroke="#1a1a9a" strokeDasharray="1.500 3.500" />
          <path d="M569.500 518 L878 1009" stroke="#b01414" />
          <path d="M187 117 L264 202 M371 203 L569.500 518" stroke="#b83030" strokeDasharray="1.500 3.500" />
          <path d="M569.500 518 L1048 384 M1512 254 L1620 223 M1462 203 L1620 144" stroke="#2ba02b" />
          <path d="M569.500 518 L90 653" stroke="#3f9a3f" strokeDasharray="1.500 3.500" />
        </g>
        <path d="M1316 203 L1371 184 L1420 203 Z" fill="#e4e4e4" />
        <path d="M1057 310 L1427 214 L1630 311 V363 L1287 477 Z" fill="#e3e3e3" />
        <path d="M1287 477 L1630 363 V507 L1249 655 Z" fill="#f8f8f8" />
        <path d="M1057 310 L1287 477 L1249 655 L1041 472 Z" fill="#b3b3b3" />
        <g fill="none" stroke="#000" strokeWidth="2.300" strokeLinejoin="round">
          <path d="M1316 203 L1371 184 L1420 203" />
          <path d="M1630 311 L1427 214 L1057 310 L1041 472 L1249 655 L1630 507" />
          <path d="M1062 326 L1275 482 L1242 638" />
          <path d="M1057 310 L1287 477 L1630 363 M1287 477 L1249 655" strokeWidth="1" shapeRendering="crispEdges" />
          <path d="M1062 326 L1048 469 L1242 638" stroke="#0d0dc4" />
        </g>
        <g transform="translate(1231.500 479) scale(.78)">
          <OrbitArt />
        </g>
      </svg>
      <div className="absolute right-1.5 bottom-1.5 flex w-[289px] flex-col items-start gap-[26px]">
        {["<LButtonDown>", "<LButtonUp>", "<MButtonDown>"].map((k) => (
          <kbd key={k} className="rounded-md bg-[#8b8b8b] px-[5px] pb-1.5 font-['DejaVu_Sans',sans-serif] text-[29px] leading-10 font-bold whitespace-nowrap text-white shadow-[0_0_0_4px_#c3c3c1] [-webkit-text-stroke:1px_white]">
            {k}
          </kbd>
        ))}
      </div>
    </div>
  );
}

/* ---------- tray ---------- */

const sunken = "border-2 border-t-[#7b7b7b] border-l-[#7b7b7b] border-r-[#e4e4e4] border-b-[#e4e4e4]";

function Chevron({ up }: { up?: boolean }) {
  return (
    <svg viewBox="0 0 10 7" className="h-[7px] w-2.5" fill="none" aria-hidden="true">
      <path d={up ? "M0 6 L5 1.500 L10 6" : "M0 1 L5 5.500 L10 1"} stroke="#555" strokeWidth="2" />
    </svg>
  );
}

function ScrollBar({ thumb, down = true }: { thumb: string; down?: boolean }) {
  return (
    <div className="flex w-5 shrink-0 flex-col bg-[#f1f1f1]">
      <button type="button" aria-label="위로" className="flex h-[21px] shrink-0 items-center justify-center">
        <Chevron up />
      </button>
      <div className={"shrink-0 bg-[#cdcdcd] " + thumb} />
      <div className="flex-1" />
      {down && (
        <button type="button" aria-label="아래로" className="flex h-[21px] shrink-0 items-center justify-center">
          <Chevron />
        </button>
      )}
    </div>
  );
}

function PanelHeader({ title }: { title: string }) {
  return (
    <div className="flex h-[23px] shrink-0 items-center border-y border-[#c9c9c9] bg-linear-to-b from-[#ededed] to-[#b8b8b8] pr-[3px] pl-2.5">
      <svg viewBox="0 0 10 9" className="h-[9px] w-2.5" aria-hidden="true">
        <path d="M0 0 H10 L5 9 Z" fill="#000" />
      </svg>
      <h2 className="ml-2 flex-1 text-[16px] leading-5">{title}</h2>
      <button type="button" aria-label={title + " 닫기"} className="flex size-4 items-center justify-center border border-[#8c8c8c] bg-[#ececec]">
        <svg viewBox="0 0 8 8" className="size-2" aria-hidden="true">
          <path d="M1 1 L7 7 M7 1 L1 7" stroke="#000" strokeWidth="1.500" />
        </svg>
      </button>
    </div>
  );
}

function Swatch({ className }: { className: string }) {
  return (
    <div className={"shrink-0 " + className}>
      <svg viewBox="0 0 50 50" preserveAspectRatio="none" className="block h-full w-full" aria-hidden="true">
        <rect width="50" height="50" fill="#fff" />
        <path d="M0 0 L50 50 H0 Z" fill="#a4b0b9" />
      </svg>
    </div>
  );
}

function Expander({ flip }: { flip?: boolean }) {
  return (
    <button type="button" aria-label="세부 정보" className="shrink-0">
      <svg viewBox="0 0 12 18" className="block h-[18px] w-3" aria-hidden="true">
        <rect x=".5" y=".5" width="11" height="17" fill="#fff" stroke="#777" />
        {flip ? (
          <>
            <rect width="12" height="10" fill="#000" />
            <path d="M3 5.500 H9" stroke="#fff" strokeWidth="2" />
            <path d="M6 11 L10 16 H2 Z" fill="#000" />
          </>
        ) : (
          <>
            <path d="M2 2 H10 L6 7 Z" fill="#000" />
            <rect y="8" width="12" height="10" fill="#000" />
            <path d="M3 13 H9 M6 10 V16" stroke="#fff" strokeWidth="1.600" />
          </>
        )}
      </svg>
    </button>
  );
}

function DropDown({ id, value, variant }: { id: string; value: string; variant: "plain" | "disabled" | "arrow" | "focus" }) {
  const off = variant === "disabled";
  const big = variant === "arrow" || variant === "focus";
  return (
    <div className={"relative min-w-0 flex-1 " + sunken + (big ? " h-[27px]" : " h-6") + (off ? " bg-[#f0f0f0] text-[#858585]" : " bg-white")}>
      <select id={id} aria-label={value} disabled={off} className="block h-full w-full appearance-none pl-0.5 opacity-100">
        <option>{value}</option>
      </select>
      {variant === "focus" && <div className="pointer-events-none absolute bottom-0 left-1 h-px w-[124px] bg-black" />}
      <div className={"pointer-events-none absolute inset-y-0 right-0 flex items-center justify-center border-r border-b border-[#6e6e6e] bg-[#f2f2f2] " + (off ? "w-4" : "w-5")}>
        {variant !== "plain" && (
          <svg viewBox="0 0 10 6" className={off ? "h-[3px] w-1.5" : "h-[5px] w-2.5"} aria-hidden="true">
            <path d="M0 0 H10 L5 6 Z" fill={off ? "#777" : "#000"} />
          </svg>
        )}
      </div>
    </div>
  );
}

function NavRow({ id, value, focus }: { id: string; value: string; focus?: boolean }) {
  return (
    <div className="flex shrink-0 items-start pr-[3px] pl-1.5">
      <button type="button" aria-label="뒤로" className="w-[27px]"><Svg className="size-5">{icons.prev}</Svg></button>
      <button type="button" aria-label="앞으로" className="w-7"><Svg className="size-5">{icons.next}</Svg></button>
      <button type="button" aria-label="홈" className="w-[27px]"><Svg className="size-5">{icons.home}</Svg></button>
      <DropDown id={id} value={value} variant={focus ? "focus" : "arrow"} />
      <button type="button" aria-label="세부 정보" className="ml-1.5"><Svg className="size-5">{icons.details}</Svg></button>
    </div>
  );
}

function Field({ id, label, muted, children }: { id: string; label: ReactNode; muted?: boolean; children: ReactNode }) {
  return (
    <div className="flex h-7 items-start">
      <label htmlFor={id} className={"w-20 shrink-0 pr-0.5 text-right leading-6 " + (muted ? "text-[#9a9a9a]" : "")}>
        {label}
      </label>
      {children}
    </div>
  );
}

function EntityInfo() {
  return (
    <section className="flex h-[204px] shrink-0 flex-col">
      <PanelHeader title="요소 정보" />
      <div className="flex h-[33px] shrink-0 items-center pr-2 pl-3">
        <h3 className="flex-1 text-[13px] font-bold">고체 그룹 (모델의 1)</h3>
        <Expander />
      </div>
      <div className="mr-7 ml-0.5 h-px shrink-0 bg-[#a0a0a0]" />
      <div className="flex pt-[7px] pr-2.5 pl-[13px]">
        <div className="h-[60px] w-[53px] shrink-0 border border-[#9a9a9a] bg-[#f2f2f2] pt-1 pb-1">
          <Swatch className="h-[50px] border-b border-[#9a9a9a]" />
        </div>
        <div className="min-w-0 flex-1 text-[13px]">
          <Field id="layer" label={<>레이어(<u>L</u>):</>}>
            <DropDown id="layer" value="Layer0" variant="plain" />
          </Field>
          <Field id="instance" label="인스턴스:">
            <input id="instance" className={"h-6 min-w-0 flex-1 bg-white px-1 " + sunken} />
          </Field>
          <Field id="kind" label="유형:" muted>
            <DropDown id="kind" value="유형: <미정의>" variant="disabled" />
          </Field>
          <Field id="volume" label="볼륨:">
            <input id="volume" readOnly defaultValue="436804347 mm³" className={"h-6 min-w-0 flex-1 px-0.5 " + sunken} />
          </Field>
        </div>
      </div>
    </section>
  );
}

const swatches: [string, string][] = [
  ["색상 A01", "bg-[#fbcdcd]"], ["색상 A02", "bg-[#f99b9b]"], ["색상 A03", "bg-[#f56666]"],
  ["색상 A04", "bg-[#f23434]"], ["색상 A05", "bg-[#ee0404]"], ["색상 A06", "bg-[#cc0003]"],
  ["색상 A07", "bg-[#990002]"], ["색상 A08", "bg-[#660003]"], ["색상 B01", "bg-[#fddacd]"],
  ["색상 B02", "bg-[#fab49b]"], ["색상 B03", "bg-[#f89068]"], ["색상 B04", "bg-[#f66b35]"],
  ["색상 B05", "bg-[#f34504]"], ["색상 B06", "bg-[#cc3608]"], ["색상 B07", "bg-[#992609]"],
  ["색상 B08", "bg-[#681c04]"], ["색상 C01", "bg-[#fee6cf]"], ["색상 C02", "bg-[#fccd9a]"],
];

function Materials() {
  return (
    <section className="flex min-h-0 flex-1 flex-col text-[12px]">
      <PanelHeader title="재질" />
      <div className="flex h-[94px] shrink-0 border-b border-[#a0a0a0] pt-[3px] pl-0.5">
        <div className="h-[87px] w-[77px] shrink-0 border border-[#9a9a9a] bg-[#f2f2f2] pt-[5px]">
          <Swatch className="h-[75px] border-b border-[#9a9a9a]" />
        </div>
        <input aria-label="재질 이름" disabled defaultValue="기본값" className={"ml-[3px] h-6 min-w-0 flex-1 px-0.5 text-[#858585] " + sunken} />
        <div className="flex w-[31px] shrink-0 flex-col items-center pt-[3px]">
          <Expander flip />
          <button type="button" aria-label="재질 만들기" className="mt-2.5 mb-1.5"><Svg className="block size-[22px]">{icons.addBox}</Svg></button>
          <Swatch className="size-[26px]" />
        </div>
      </div>
      <div className="flex shrink-0 items-end pt-1">
        <div role="tablist" className="flex flex-1 items-end leading-5">
          <button type="button" role="tab" aria-selected="true" className="h-[23px] w-[50px] border-t border-r-2 border-t-white border-r-[#7b7b7b] pr-3.5">선택</button>
          <button type="button" role="tab" aria-selected="false" className="h-5 w-[47px] border-t border-r-2 border-t-white border-r-[#7b7b7b] pr-3.5">편집</button>
        </div>
        <button type="button" aria-label="샘플 색칠" className="mr-1 mb-1"><Svg className="block size-[22px]">{icons.dropper}</Svg></button>
      </div>
      <div className="h-1.5 shrink-0" />
      <NavRow id="library" value="색상" />
      <div className="mt-0.5 flex min-h-0 flex-1 border-t border-[#a0a0a0]">
        <div className="grid min-w-0 flex-1 grid-cols-[62px_62px_62px] content-start gap-0.5 overflow-hidden bg-white pt-0.5 pl-[3px]">
          {swatches.map(([name, color]) => (
            <button key={name} type="button" aria-label={name} className="h-[62px] border border-[#9c9c9c] p-px">
              <span className={"block h-full w-full " + color} />
            </button>
          ))}
        </div>
        <ScrollBar thumb="h-[21px]" />
      </div>
      <div className="h-2 shrink-0 pt-0.5"><div className="h-[3px] bg-[#858585]" /></div>
      <div className="h-6 shrink-0 border-y border-[#a0a0a0] bg-[#e5e5e5] px-1 leading-[21px]">선택</div>
      <div className="h-1.5 shrink-0" />
      <NavRow id="secondary" value="재질" focus />
      <div className="mt-0.5 flex h-[35px] shrink-0 border-t border-[#a0a0a0]">
        <div className="grid min-w-0 flex-1 grid-cols-[62px_62px_62px] gap-0.5 overflow-hidden bg-white pt-0.5 pl-[3px]">
          {["가구", "나무", "벽돌"].map((n) => (
            <button key={n} type="button" aria-label={n} className="flex h-[62px] items-start justify-center border border-[#9c9c9c] pt-3">
              <svg viewBox="0 0 36 36" className="size-9" aria-hidden="true">
                <path d="M1 4 L10 1 L12 4 L16 4 L16 36 H3 Z" fill="#8bb8d6" stroke="#3b5f7a" />
                <path d="M5 9 L34 1 L34 36 H5 Z" fill="#b5976f" stroke="#4b4438" />
              </svg>
            </button>
          ))}
        </div>
        <ScrollBar thumb="h-[13px]" down={false} />
      </div>
    </section>
  );
}

function Tray() {
  return (
    <aside className="flex w-[299px] shrink-0 flex-col bg-[#f1f1f1] pl-[3px]">
      <div className="flex h-[26px] shrink-0 items-center bg-linear-to-b from-[#c3cfdf] to-[#d6e2f0] pr-1 pb-0.5 pl-1">
        <h1 className="flex-1 text-[15px] leading-5 text-[#222]">기본 트레이</h1>
        <button type="button" aria-label="고정" className="mr-2.5">
          <svg viewBox="0 0 8 10" className="h-2.5 w-2" fill="none" aria-hidden="true">
            <path d="M2 6 V1 H6 V6 M0 6 H8 M4 6 V10" stroke="#111" strokeWidth="1.300" />
            <path d="M5.500 1 V6" stroke="#111" strokeWidth="1.500" />
          </svg>
        </button>
        <button type="button" aria-label="닫기" className="flex size-3 items-center justify-center bg-[#c35356]">
          <svg viewBox="0 0 8 8" className="size-1.5" aria-hidden="true">
            <path d="M1 1 L7 7 M7 1 L1 7" stroke="#fff" strokeWidth="2" />
          </svg>
        </button>
      </div>
      <div className="flex min-h-0 flex-1">
        <div className="flex min-w-0 flex-1 flex-col overflow-hidden border-r-2 border-white">
          <EntityInfo />
          <Materials />
        </div>
        <ScrollBar thumb="h-[21px]" />
      </div>
    </aside>
  );
}

/* ---------- status bar ---------- */

function StatusBar() {
  return (
    <div className="flex h-[26px] shrink-0 items-center bg-[#f1f1f1] pt-1.5 pl-1.5">
      <div className="flex gap-4">
        {["#9b9b9b", "#111111", "#9b9b9b"].map((c, i) => (
          <svg key={i} viewBox="0 0 19 19" className="size-[19px]" fill="none" aria-hidden="true">
            <circle cx="9.500" cy="9.500" r="8.300" stroke={c} strokeWidth="1.500" />
            {i === 0 && <path d="M9.500 15 C8 11 6.500 9 6.500 6.500 A3 3 0 0 1 12.500 6.500 C12.500 9 11 11 9.500 15 Z" fill={c} />}
            {i === 1 && (
              <g fill={c}>
                <circle cx="9.500" cy="5" r="1.600" />
                <path d="M7 7.500 H12 V11 H10.800 V15 H8.200 V11 H7 Z" />
              </g>
            )}
            {i === 2 && (
              <g fill={c}>
                <circle cx="9.500" cy="7" r="3" />
                <path d="M4 15 C4 10 15 10 15 15 C12 18 7 18 4 15 Z" />
              </g>
            )}
          </svg>
        ))}
      </div>
      <div className="mr-2.5 ml-3 h-[18px] w-px bg-[#8c8c8c]" />
      <p className="min-w-0 flex-1 text-[17px] leading-5 whitespace-nowrap">
        끌어서 보기 각도를 회전시킵니다. Shift = 이동(상하/좌우), Control = 중력 해제.
      </p>
      <div className="flex h-5 w-[307px] shrink-0 items-center">
        <div className="mr-3 h-3.5 w-px bg-[#8c8c8c]" />
        <label htmlFor="vcb" className="mr-2.5 text-[16px] leading-5">단위</label>
        <input id="vcb" className="mr-1 h-5 min-w-0 flex-1 border border-b-0 border-[#a9b9cf] bg-[#f1f1f1]" />
      </div>
    </div>
  );
}

const menus = ["파일(F)", "편집(E)", "보기(V)", "카메라(C)", "그리기(R)", "도구(T)", "창(W)", "도움말(H)"];

export default function App() {
  return (
    <div className="flex h-screen flex-col bg-white pt-10 pb-11 font-['Noto_Sans_CJK_KR',sans-serif] text-black">
      <nav className="flex h-6 shrink-0 items-center gap-[13px] pl-[7px] text-[16px] leading-6">
        {menus.map((m) => (
          <button key={m} type="button" className="whitespace-nowrap">{m}</button>
        ))}
      </nav>
      <TopToolbar />
      <div className="relative flex min-h-0 flex-1">
        <LeftToolbar />
        <Viewport />
        <Tray />
        <div className="pointer-events-none absolute bottom-0 left-0 h-[73px] w-[1310px] bg-black/42" />
      </div>
      <StatusBar />
    </div>
  );
}
